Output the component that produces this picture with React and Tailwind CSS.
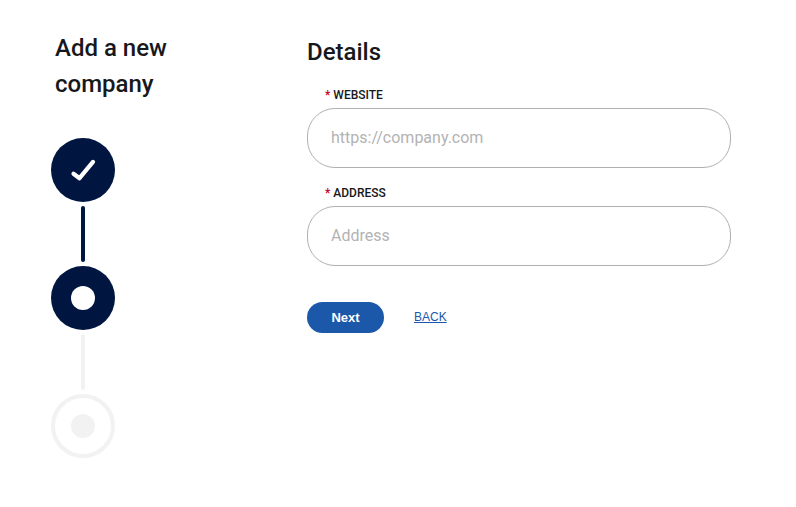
import React from 'react';

const Field = ({ label, placeholder, className = '' }) => {
  return (
    <label className={`block ${className}`}>
      <span className="block h-[18px] pl-[18px] text-[12px] leading-[18px] font-medium text-[#17181b]">
        <span className="text-[#c4002b]">*</span> {label}
      </span>
      <input
        type="text"
        placeholder={placeholder}
        className="mt-1 block h-[60px] w-full rounded-[28px] border border-[#b0b0b0] bg-white px-[23px] pb-0.5 text-[16px] text-[#17181b] outline-none placeholder:text-[#b3b3b3]"
      />
    </label>
  );
};

const Stepper = () => {
  return (
    <div className="flex w-16 flex-col items-center gap-1">
      {/* Completed step */}
      <div className="flex size-16 items-center justify-center rounded-full bg-[#001540]">
        <svg width="26" height="24" viewBox="0 0 26 24" fill="none">
          <path d="M3.5 15.7L9.5 20.2L23 3.9" stroke="white" strokeWidth="4.2" strokeLinecap="round" strokeLinejoin="round" />
        </svg>
      </div>
      <div className="h-14 w-1 rounded-full bg-[#001540]"></div>

      {/* Current step */}
      <div className="flex size-16 items-center justify-center rounded-full bg-[#001540]">
        <div className="size-6 rounded-full bg-white"></div>
      </div>
      <div className="h-14 w-1 rounded-full bg-[#f2f2f2]"></div>

      {/* Upcoming step */}
      <div className="flex size-16 items-center justify-center rounded-full border-4 border-[#f2f2f2] bg-white">
        <div className="size-6 rounded-full bg-[#f2f2f2]"></div>
      </div>
    </div>
  );
};

const App = () => {
  return (
    <div className="flex h-screen overflow-hidden bg-white font-['Roboto',sans-serif] text-[#17181b]">
      <aside className="w-[307px] shrink-0 pl-[51px] pt-[30px]">
        <h1 className="mb-9 w-[150px] pl-1 text-[24px] leading-[36px] font-medium">Add a new company</h1>
        <Stepper />
      </aside>

      <main className="w-[424px] pt-[34px]">
        <h2 className="mb-4 text-[24px] leading-[36px] font-medium">Details</h2>
        <Field label="WEBSITE" placeholder="https://company.com" />
        <Field label="ADDRESS" placeholder="Address" className="mt-4" />

        <div className="mt-9 flex items-center gap-[30px] font-['Liberation_Sans',sans-serif]">
          <button className="h-[31px] w-[77px] rounded-full bg-[#1b58a9] text-[13px] font-bold text-white">Next</button>
          <a href="#" className="pb-0.5 text-[12px] text-[#1b58a9] underline">BACK</a>
        </div>
      </main>
    </div>
  );
};

export default App;
